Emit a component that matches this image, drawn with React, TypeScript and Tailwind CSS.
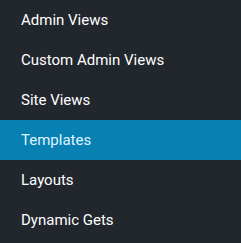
import React from 'react';

const items = ['Admin Views', 'Custom Admin Views', 'Site Views', 'Templates', 'Layouts', 'Dynamic Gets'];

const App: React.FC = () => {
  return (
    <div className="w-[241px] h-[243px] bg-[#22262d] font-['Roboto',sans-serif]">
      <ul className="flex flex-col">
        {items.map((item) => (
          <li
            key={item}
            className={
              item === 'Templates'
                ? 'h-10 flex items-center pl-[21px] bg-[#0880b2] text-[#dff4ff] text-[15px] font-normal'
                : 'h-10 flex items-center pl-[21px] text-white text-[15px] font-normal'
            }
          >
            {item}
          </li>
        ))}
      </ul>
    </div>
  );
};

export default App;
